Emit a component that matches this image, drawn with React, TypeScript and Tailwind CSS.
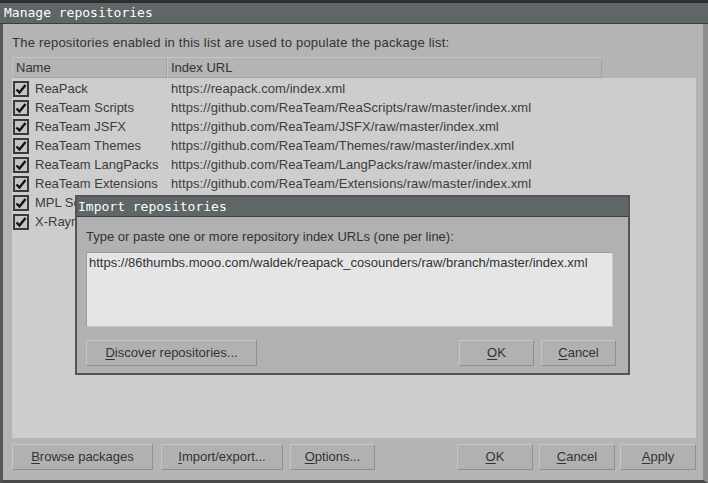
import { Fragment } from "react"

const repos = [
  ["ReaPack", "https://reapack.com/index.xml"],
  ["ReaTeam Scripts", "https://github.com/ReaTeam/ReaScripts/raw/master/index.xml"],
  ["ReaTeam JSFX", "https://github.com/ReaTeam/JSFX/raw/master/index.xml"],
  ["ReaTeam Themes", "https://github.com/ReaTeam/Themes/raw/master/index.xml"],
  ["ReaTeam LangPacks", "https://github.com/ReaTeam/LangPacks/raw/master/index.xml"],
  ["ReaTeam Extensions", "https://github.com/ReaTeam/Extensions/raw/master/index.xml"],
  ["MPL Scripts", "https://github.com/MichaelPilyavskiy/ReaScripts/raw/master/index.xml"],
  ["X-Raym", "https://github.com/X-Raym/REAPER-ReaScripts/raw/master/index.xml"],
]

function Check() {
  return (
    <span className="flex h-[16px] w-[16px] items-center justify-center border-2 border-[#3a3a3a] bg-[#c4c4c4]">
      <svg width="12" height="12" viewBox="0 0 12 12">
        <path d="M1.5 6.5 L4.5 9.5 L10.5 2" fill="none" stroke="#111" strokeWidth="2.4" />
      </svg>
    </span>
  )
}

// mnemonic buttons: one letter underlined
function Btn({ label, w, u = 0 }: { label: string; w: string; u?: number }) {
  return (
    <button
      className={`${w} flex h-[26px] shrink-0 items-center justify-center border border-t-[#c6c6c6] border-l-[#c6c6c6] border-r-[#8f8f8f] border-b-[#8f8f8f] bg-[#b1b1b1] text-[13px] text-[#333]`}
    >
      {label.slice(0, u)}
      <span className="underline underline-offset-2">{label[u]}</span>
      {label.slice(u + 1)}
    </button>
  )
}

export default function App() {
  return (
    <div className="relative flex h-[483px] w-[708px] flex-col overflow-hidden bg-[#2e2e2e] pt-[3px] font-['Liberation_Sans',sans-serif]">
      <div className="flex h-[21px] shrink-0 items-center border-b border-[#3a3f40] bg-[#5e6667] pl-[4px] font-['DejaVu_Sans_Mono',monospace] text-[13px] text-white">
        Manage repositories
      </div>

      <div className="flex min-h-0 flex-1 flex-col border-l-[3px] border-r-[5px] border-b-[3px] border-l-[#575757] border-r-[#8e8e8e] border-b-[#4a4a4a] bg-[#b4b4b4] pl-[9px] pr-[7px]">
        <div className="mt-[11px] h-[16px] text-[13px] leading-[16px] tracking-[0.23px] text-[#333]">
          The repositories enabled in this list are used to populate the package list:
        </div>

        <div className="mt-[6px] flex h-[381px] flex-col bg-[#cdcdcd]">
          <div className="flex h-[21px] shrink-0 bg-[#b4b4b4] text-[13px] text-[#333]">
            <div className="flex w-[155px] items-center border border-t-[#c4c4c4] border-l-[#c4c4c4] border-r-[#a2a2a2] border-b-[#a2a2a2] pl-[3px]">
              Name
            </div>
            <div className="flex w-[435px] items-center border border-t-[#c4c4c4] border-l-[#c4c4c4] border-r-[#a2a2a2] border-b-[#a2a2a2] pl-[3px]">
              Index URL
            </div>
          </div>
          <div className="grid grid-cols-[155px_1fr] auto-rows-[19px] pt-[1px] text-[13px] text-[#3c3c3c]">
            {repos.map(([name, url]) => (
              <Fragment key={name}>
                <div className="flex items-center gap-[6px] pl-[1px]">
                  <Check />
                  <span>{name}</span>
                </div>
                <div className="flex items-center pl-[4px] tracking-[0.08px]">{url}</div>
              </Fragment>
            ))}
          </div>
        </div>

        <div className="mt-[6px] flex items-center">
          <Btn label="Browse packages" w="w-[141px]" />
          <div className="ml-[8px]"><Btn label="Import/export..." w="w-[122px]" /></div>
          <div className="ml-[7px]"><Btn label="Options..." w="w-[85px]" /></div>
          <div className="ml-auto"><Btn label="OK" w="w-[76px]" /></div>
          <div className="ml-[6px]"><Btn label="Cancel" w="w-[76px]" /></div>
          <div className="ml-[5px]"><Btn label="Apply" w="w-[76px]" /></div>
        </div>
      </div>

      {/* import dialog over the list */}
      <div className="absolute left-[75px] top-[195px] flex h-[180px] w-[555px] flex-col border-2 border-[#555]">
        <div className="flex h-[20px] shrink-0 items-center border-b border-[#3a3f40] bg-[#5e6667] pl-[1px] font-['DejaVu_Sans_Mono',monospace] text-[13px] text-white">
          Import repositories
        </div>
        <div className="flex flex-1 flex-col bg-[#b1b1b1] pl-[9px] pr-[12px]">
          <div className="mt-[12px] h-[16px] text-[13px] leading-[16px] text-[#333]">
            Type or paste one or more repository index URLs (one per line):
          </div>
          <div className="mr-[3px] mt-[7px] h-[75px] border border-t-[#9c9c9c] border-l-[#9c9c9c] border-r-[#c8c8c8] border-b-[#c8c8c8] bg-[#e5e5e5] px-[2px] pt-[1px] text-[13px] leading-[18px] text-[#333]">
            https://86thumbs.mooo.com/waldek/reapack_cosounders/raw/branch/master/index.xml
          </div>
          <div className="mt-[13px] flex">
            <Btn label="Discover repositories..." w="w-[171px]" />
            <div className="ml-auto"><Btn label="OK" w="w-[75px]" /></div>
            <div className="ml-[7px]"><Btn label="Cancel" w="w-[75px]" /></div>
          </div>
        </div>
      </div>
    </div>
  )
}
